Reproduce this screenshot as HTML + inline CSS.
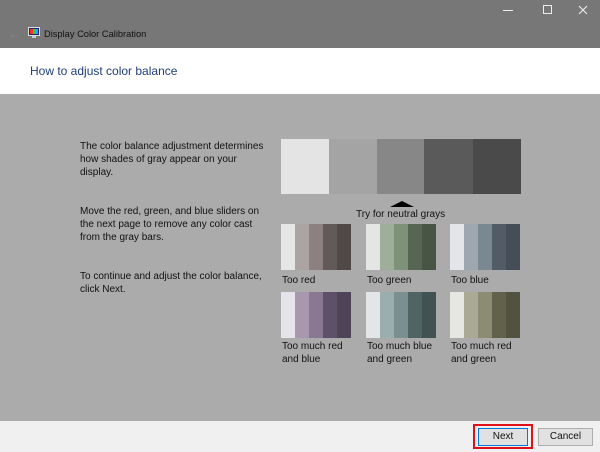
<!DOCTYPE html>
<html><head><style>
body{margin:0;width:600px;height:452px;position:relative;overflow:hidden;font-family:"Liberation Sans",sans-serif;font-size:10px;color:#111;background:#ababab}
.a{position:absolute}
.t{position:absolute;line-height:13px;white-space:nowrap}
.sw{position:absolute;height:46px;display:flex}
.sw div{width:14px;height:100%}
</style></head><body>
<div class="a" style="left:0;top:0;width:600px;height:48px;background:#777"></div>
<div class="a" style="left:8px;top:27px;color:#8a8a8a;font-size:12px">←</div>
<svg class="a" style="left:28px;top:27px" width="12" height="12"><rect x="0.5" y="0.5" width="11" height="8" fill="#1a2a6a" stroke="#ddd"/><rect x="2" y="2" width="3" height="5" fill="#e33"/><rect x="5" y="2" width="3" height="5" fill="#3c3"/><rect x="8" y="2" width="2" height="5" fill="#39f"/><rect x="4" y="9" width="4" height="2" fill="#ccc"/></svg>
<div class="t" style="left:44px;top:28px;color:#111;font-size:9.3px">Display Color Calibration</div>
<div class="a" style="left:503px;top:10px;width:10px;height:1px;background:#eee"></div>
<div class="a" style="left:543px;top:5px;width:7px;height:7px;border:1px solid #eee"></div>
<svg class="a" style="left:578px;top:5px" width="10" height="10"><path d="M1 1L9 9M9 1L1 9" stroke="#eee" stroke-width="1.1"/></svg>
<div class="a" style="left:0;top:48px;width:600px;height:46px;background:#fff"></div>
<div class="t" style="left:30px;top:65px;color:#1f3f7a;font-size:12px">How to adjust color balance</div>
<div class="t" style="left:80px;top:140px">The color balance adjustment determines<br>how shades of gray appear on your<br>display.</div>
<div class="t" style="left:80px;top:205px">Move the red, green, and blue sliders on<br>the next page to remove any color cast<br>from the gray bars.</div>
<div class="t" style="left:80px;top:270px">To continue and adjust the color balance,<br>click Next.</div>
<div class="a" style="left:281px;top:139px;height:55px;display:flex">
<div style="width:48px;background:#e4e4e4"></div><div style="width:48px;background:#a4a4a4"></div><div style="width:47px;background:#878787"></div><div style="width:49px;background:#5a5a5a"></div><div style="width:48px;background:#4a4a4a"></div></div>
<div class="a" style="left:390px;top:201px;width:0;height:0;border-left:12px solid transparent;border-right:12px solid transparent;border-bottom:6px solid #000"></div>
<div class="t" style="left:356px;top:208px">Try for neutral grays</div>
<div class="sw" style="left:281px;top:224px"><div style="background:#e6e6e6"></div><div style="background:#aca3a3"></div><div style="background:#8c8080"></div><div style="background:#625959"></div><div style="background:#514848"></div></div>
<div class="sw" style="left:366px;top:224px"><div style="background:#e4e6e4"></div><div style="background:#9eae9a"></div><div style="background:#7e927a"></div><div style="background:#566652"></div><div style="background:#485444"></div></div>
<div class="sw" style="left:450px;top:224px"><div style="background:#e4e5e8"></div><div style="background:#9ea7b0"></div><div style="background:#7a8892"></div><div style="background:#525c66"></div><div style="background:#454d56"></div></div>
<div class="t" style="left:282px;top:274px">Too red</div>
<div class="t" style="left:367px;top:274px">Too green</div>
<div class="t" style="left:451px;top:274px">Too blue</div>
<div class="sw" style="left:281px;top:292px"><div style="background:#e6e4ea"></div><div style="background:#a898ae"></div><div style="background:#8a7892"></div><div style="background:#5e5068"></div><div style="background:#4e4458"></div></div>
<div class="sw" style="left:366px;top:292px"><div style="background:#e2e6e6"></div><div style="background:#9aaeae"></div><div style="background:#7a9090"></div><div style="background:#506464"></div><div style="background:#425252"></div></div>
<div class="sw" style="left:450px;top:292px"><div style="background:#e6e6e2"></div><div style="background:#aaaa94"></div><div style="background:#8c8c72"></div><div style="background:#62624c"></div><div style="background:#525240"></div></div>
<div class="t" style="left:282px;top:340px">Too much red<br>and blue</div>
<div class="t" style="left:367px;top:340px">Too much blue<br>and green</div>
<div class="t" style="left:451px;top:340px">Too much red<br>and green</div>
<div class="a" style="left:0;top:421px;width:600px;height:31px;background:#f0f0f0"></div>
<div class="a" style="left:473px;top:424px;width:56px;height:21px;border:2px solid #e0101a"></div>
<div class="a" style="left:478px;top:428px;width:48px;height:16px;border:1px solid #0078d7;background:#e1e1e1;text-align:center;line-height:16px">Next</div>
<div class="a" style="left:538px;top:428px;width:53px;height:16px;border:1px solid #adadad;background:#e1e1e1;text-align:center;line-height:16px">Cancel</div>
</body></html>
